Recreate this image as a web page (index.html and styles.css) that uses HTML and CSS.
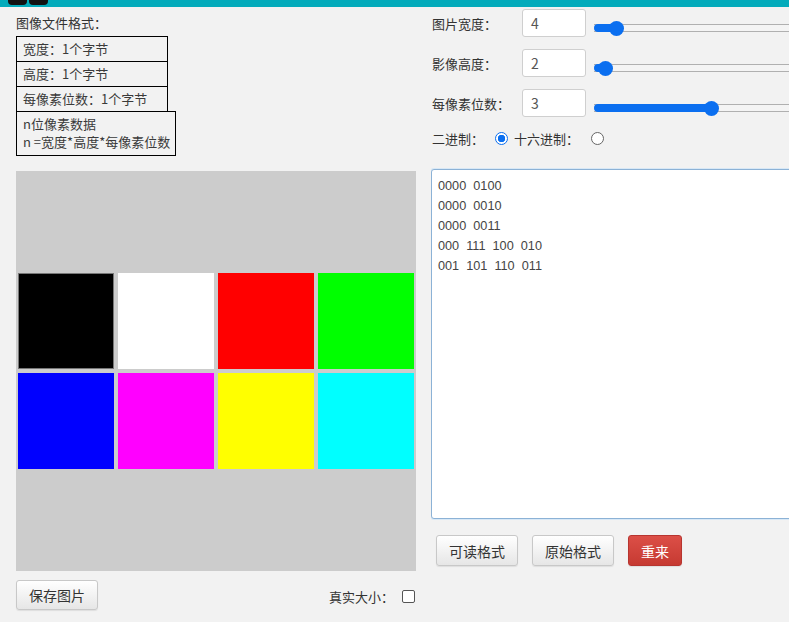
FILE: index.html
```html
<!DOCTYPE html>
<html lang="zh">
<head>
<meta charset="utf-8">
<title>图像文件格式</title>
<link rel="stylesheet" href="styles.css">
</head>
<body>
<div class="topbar">
  <span class="tab"></span><span class="tab"></span>
</div>
<div class="main">
  <div class="left">
    <div class="title">图像文件格式：</div>
    <div class="box">宽度：1个字节</div>
    <div class="box">高度：1个字节</div>
    <div class="box">每像素位数：1个字节</div>
    <div class="box box-wide">n位像素数据<br>n =宽度*高度*每像素位数</div>
    <div class="canvas">
      <div class="grid">
        <div class="cell c-black"></div>
        <div class="cell c-white"></div>
        <div class="cell c-red"></div>
        <div class="cell c-green"></div>
        <div class="cell c-blue"></div>
        <div class="cell c-magenta"></div>
        <div class="cell c-yellow"></div>
        <div class="cell c-cyan"></div>
      </div>
    </div>
    <div class="bottom">
      <button class="btn">保存图片</button>
      <label class="real">真实大小：<span class="checkbox"></span></label>
    </div>
  </div>
  <div class="right">
    <div class="row">
      <span class="label">图片宽度：</span>
      <span class="input">4</span>
      <div class="slider"><div class="fill" style="width:22px"></div><div class="thumb" style="left:22px"></div></div>
    </div>
    <div class="row">
      <span class="label">影像高度：</span>
      <span class="input">2</span>
      <div class="slider"><div class="fill" style="width:11px"></div><div class="thumb" style="left:11px"></div></div>
    </div>
    <div class="row">
      <span class="label">每像素位数：</span>
      <span class="input">3</span>
      <div class="slider"><div class="fill" style="width:117px"></div><div class="thumb" style="left:117px"></div></div>
    </div>
    <div class="radios">
      <span>二进制：</span>
      <span class="radio checked"></span>
      <span>十六进制：</span>
      <span class="radio radio-2"></span>
    </div>
    <textarea class="output">0000  0100
0000  0010
0000  0011
000  111  100  010
001  101  110  011</textarea>
    <div class="actions">
      <button class="btn">可读格式</button>
      <button class="btn">原始格式</button>
      <button class="btn btn-red">重来</button>
    </div>
  </div>
</div>
</body>
</html>
```

FILE: styles.css
```css
html, body {
  margin: 0;
  padding: 0;
  overflow: hidden;
}
body {
  width: 789px;
  height: 622px;
  background: #f2f2f2;
  font-family: "Noto Sans CJK SC", "Liberation Sans", sans-serif;
  font-size: 13px;
  color: #333;
}
.topbar {
  height: 7px;
  background: #03abbb;
  display: flex;
  gap: 2px;
  padding-left: 8px;
}
.tab {
  width: 19px;
  height: 5px;
  background: #111;
  border-radius: 0 0 4px 4px;
}
.main {
  display: flex;
  padding-left: 16px;
}
.left {
  flex: none;
  width: 400px;
  padding-top: 6px;
}
.title {
  line-height: 20px;
  margin-bottom: 3px;
}
.box {
  width: 144px;
  height: 24px;
  line-height: 24px;
  border: 1px solid #000;
  padding-left: 6px;
  margin-top: -1px;
  color: #3a3a3a;
  box-sizing: content-box;
  white-space: nowrap;
}
.title + .box {
  margin-top: 0;
}
.box-wide {
  width: 152px;
  height: 36px;
  line-height: 18px;
  padding-top: 3px;
  padding-bottom: 4px;
}
.canvas {
  margin-top: 15px;
  width: 400px;
  height: 400px;
  background: #cccccc;
  display: flex;
  align-items: center;
}
.grid {
  display: grid;
  grid-template-columns: repeat(4, 100px);
  grid-template-rows: repeat(2, 100px);
}
.cell {
  margin: 2px;
  width: 96px;
  height: 96px;
}
.c-black { background: #000; box-shadow: inset 0 0 0 1px #777; }
.c-white { background: #fff; }
.c-red { background: #ff0000; }
.c-green { background: #00ff00; }
.c-blue { background: #0000ff; }
.c-magenta { background: #ff00ff; }
.c-yellow { background: #ffff00; }
.c-cyan { background: #00ffff; }
.bottom {
  margin-top: 9px;
  display: flex;
  justify-content: space-between;
  align-items: center;
}
.btn {
  height: 30px;
  padding: 0;
  white-space: nowrap;
  font-family: "Noto Sans CJK SC", "Liberation Sans", sans-serif;
  font-size: 14px;
  color: #333;
  background: linear-gradient(#ffffff, #e6e6e6);
  border: 1px solid #c8c8c8;
  border-radius: 3px;
  box-shadow: 0 1px 1px rgba(0,0,0,0.08);
}
.bottom .btn {
  width: 82px;
}
.real {
  display: flex;
  align-items: center;
  gap: 8px;
  margin-right: 1px;
  margin-top: 2px;
}
.checkbox {
  width: 11px;
  height: 11px;
  border: 1px solid #555;
  border-radius: 2px;
  background: #fff;
}
.right {
  margin-left: 15px;
  padding-top: 2px;
  flex: 1;
  min-width: 0;
  overflow: hidden;
}
.row {
  display: flex;
  align-items: center;
  height: 28px;
  margin-bottom: 12px;
}
.label {
  flex: none;
  width: 91px;
  padding-left: 1px;
  box-sizing: border-box;
}
.input {
  flex: none;
  width: 54px;
  height: 26px;
  line-height: 26px;
  padding-left: 8px;
  border: 1px solid #cfcfcf;
  border-radius: 3px;
  background: #fff;
  font-size: 14px;
  color: #555;
}
.slider {
  flex: none;
  position: relative;
  margin-left: 8px;
  margin-top: 9px;
  width: 260px;
  height: 6px;
  border-top: 1px solid #b0b0b0;
  border-bottom: 1px solid #b0b0b0;
  background: #f4f4f4;
}
.fill {
  position: absolute;
  left: 0;
  top: -1px;
  height: 8px;
  background: #0b6ff0;
  border-radius: 4px;
}
.thumb {
  position: absolute;
  top: -4px;
  width: 15px;
  height: 15px;
  margin-left: -7px;
  border-radius: 50%;
  background: #0b6ff0;
}
.radios {
  display: flex;
  align-items: center;
  height: 20px;
  margin-top: -1px;
  padding-left: 1px;
}
.radio {
  flex: none;
  width: 11px;
  height: 11px;
  border: 1px solid #666;
  border-radius: 50%;
  background: #fff;
  margin: 0 6px 0 11px;
  box-sizing: content-box;
}
.radio.checked {
  border-color: #0b6ff0;
  background: radial-gradient(circle, #0b6ff0 0 3.5px, #fff 4px);
}
.radio-2 {
  margin-left: 12px;
}
.output {
  display: block;
  margin-top: 21px;
  width: 380px;
  height: 350px;
  box-sizing: border-box;
  border: 1px solid #8cb2d6;
  border-radius: 3px;
  box-shadow: 0 0 0 1px #d8e8f6;
  padding: 6px 6px;
  font-family: "Liberation Sans", sans-serif;
  font-size: 12.7px;
  line-height: 20px;
  color: #444;
  background: #fff;
  resize: none;
  outline: none;
}
.actions {
  display: flex;
  gap: 14px;
  margin-top: 16px;
  padding-left: 5px;
}
.actions .btn {
  width: 82px;
  height: 31px;
}
.actions .btn-red {
  width: 54px;
  color: #fff;
  background: linear-gradient(#dc4f47, #c63a32);
  border-color: #b73530;
}
```
